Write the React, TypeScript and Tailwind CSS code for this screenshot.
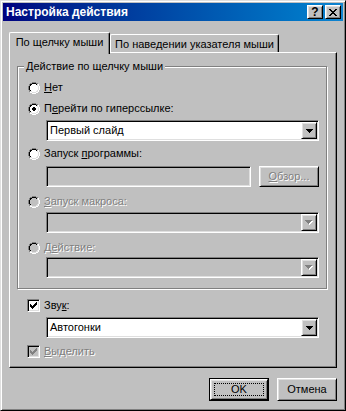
import React from 'react';

// classic 3D edges
const raised =
  'border border-t-white border-l-white border-r-black border-b-black shadow-[inset_1px_1px_0_#dfdfdf,inset_-1px_-1px_0_#808080]';
const sunken =
  'border border-t-[#808080] border-l-[#808080] border-r-white border-b-white shadow-[inset_1px_1px_0_#000,inset_-1px_-1px_0_#dfdfdf] p-px';
const dimmed = 'text-[#808080] [text-shadow:1px_1px_0_#fff]';

// Pixel-Bitmaps wie im klassischen Windows-Theme
const ARROW = ['#######', '.#####.', '..###..', '...#...'];
const CLOSE = ['##....##', '.##..##.', '..####..', '...##...', '..####..', '.##..##.', '##....##'];
const CHECK = ['......#', '.....##', '#...###', '##.###.', '#####..', '.###...', '..#....'];
const RADIO = [
  '....OOOO....',
  '..OOIIIIOO..',
  '.OIIFFFFIIO.',
  '.OIFFFFFFIO.',
  'OIFFFDDFFFIO',
  'OIFFDDDDFFIO',
  'OIFFDDDDFFIO',
  'OIFFFDDFFFIO',
  '.OIFFFFFFIO.',
  '.OIIFFFFIIO.',
  '..OOIIIIOO..',
  '....OOOO....',
];

function Pixels({ rows, fill, shadow }: { rows: string[]; fill: string; shadow?: string }) {
  const pts: [number, number][] = [];
  rows.forEach((r, y) => [...r].forEach((c, x) => c === '#' && pts.push([x, y])));
  const w = rows[0].length + (shadow ? 1 : 0);
  const h = rows.length + (shadow ? 1 : 0);
  return (
    <svg width={w} height={h} shapeRendering="crispEdges" className="block shrink-0">
      {shadow && pts.map(([x, y]) => <rect key={`s${x}-${y}`} x={x + 1} y={y + 1} width={1} height={1} fill={shadow} />)}
      {pts.map(([x, y]) => <rect key={`${x}-${y}`} x={x} y={y} width={1} height={1} fill={fill} />)}
    </svg>
  );
}

function Radio({ checked = false, disabled = false }: { checked?: boolean; disabled?: boolean }) {
  const cells: React.ReactNode[] = [];
  RADIO.forEach((r, y) =>
    [...r].forEach((c, x) => {
      let color = '';
      const tl = x + y <= 10;
      if (c === 'O') color = tl ? '#808080' : '#fff';
      if (c === 'I') color = tl ? '#000' : '#dfdfdf';
      if (c === 'F') color = disabled ? '#c0c0c0' : '#fff';
      if (c === 'D') color = checked ? '#000' : disabled ? '#c0c0c0' : '#fff';
      if (color) cells.push(<rect key={`${x}-${y}`} x={x} y={y} width={1} height={1} fill={color} />);
    })
  );
  return (
    <svg width={12} height={12} shapeRendering="crispEdges" className="block shrink-0">
      {cells}
    </svg>
  );
}

function Checkbox({ checked = false, disabled = false }: { checked?: boolean; disabled?: boolean }) {
  return (
    <div className={`${sunken} w-[13px] h-[13px] shrink-0`}>
      <div className={`w-full h-full flex items-center justify-center ${disabled ? 'bg-[#c0c0c0]' : 'bg-white'}`}>
        {checked && <Pixels rows={CHECK} fill={disabled ? '#808080' : '#000'} />}
      </div>
    </div>
  );
}

function Combo({ value, disabled = false, className = '' }: { value?: string; disabled?: boolean; className?: string }) {
  return (
    <div className={`${sunken} w-[273px] h-[21px] flex ${className}`}>
      <div className={`flex-1 flex items-center pl-[2px] ${disabled ? 'bg-[#c0c0c0]' : 'bg-white'}`}>{value}</div>
      <div className={`${raised} w-[16px] h-full bg-[#c0c0c0] flex items-center justify-center`}>
        {disabled ? <Pixels rows={ARROW} fill="#808080" shadow="#fff" /> : <Pixels rows={ARROW} fill="#000" />}
      </div>
    </div>
  );
}

function Option({
  checked,
  disabled,
  className = '',
  children,
}: {
  checked?: boolean;
  disabled?: boolean;
  className?: string;
  children: React.ReactNode;
}) {
  return (
    <div className={`flex items-center gap-[4px] h-[13px] ${className}`}>
      <Radio checked={checked} disabled={disabled} />
      <span className={`whitespace-nowrap ${disabled ? dimmed : ''}`}>{children}</span>
    </div>
  );
}

export default function App() {
  return (
    <div className="w-[346px] h-[411px] bg-[#c0c0c0] border border-t-[#dfdfdf] border-l-[#dfdfdf] border-r-black border-b-black shadow-[inset_1px_1px_0_#fff,inset_-1px_-1px_0_#808080] p-[2px] flex flex-col font-['Liberation_Sans',Arial,sans-serif] text-[11px] leading-[13px] text-black select-none">
      {/* Titelleiste */}
      <div className="h-[18px] flex items-center bg-linear-to-r from-[#000080] to-[#1084d0] pl-[3px] pr-[2px]">
        <span className="flex-1 text-white font-bold text-[12px] whitespace-nowrap">Настройка действия</span>
        <div className={`${raised} w-[16px] h-[14px] bg-[#c0c0c0] flex items-center justify-center font-bold text-[12px] leading-none`}>
          ?
        </div>
        <div className={`${raised} w-[16px] h-[14px] bg-[#c0c0c0] flex items-center justify-center ml-[2px]`}>
          <Pixels rows={CLOSE} fill="#000" />
        </div>
      </div>

      <div className="flex flex-col px-[6px]">
        {/* Reiter */}
        <div className="flex items-end mt-[11px] -mb-[2px] relative z-10">
          <div className="h-[22px] w-[101px] bg-[#c0c0c0] border-l border-t border-r border-l-white border-t-white border-r-black rounded-t-[2px] shadow-[inset_-1px_0_0_#808080] flex justify-center pt-[3px] whitespace-nowrap">
            По щелчку мыши
          </div>
          <div className="h-[18px] w-[169px] mb-[2px] bg-[#c0c0c0] border-l border-t border-r border-l-white border-t-white border-r-black rounded-t-[2px] shadow-[inset_-1px_0_0_#808080] flex justify-center pt-[3px] whitespace-nowrap">
            По наведении указателя мыши
          </div>
        </div>

        {/* Reiterseite */}
        <div className="h-[316px] bg-[#c0c0c0] border border-t-white border-l-white border-r-black border-b-black shadow-[inset_-1px_-1px_0_#808080] flex flex-col pt-[7px]">
          <fieldset className="ml-[7px] w-[310px] h-[229px] border border-[#808080] shadow-[1px_1px_0_#fff,inset_1px_1px_0_#fff] pl-[6px]">
            <legend className="px-[2px] bg-[#c0c0c0] whitespace-nowrap">Действие по щелчку мыши</legend>
            <div className="flex flex-col pl-[4px]">
              <Option className="mt-[8px]">
                <u>Н</u>ет
              </Option>
              <Option checked className="mt-[8px]">
                П<u>е</u>рейти по гиперссылке:
              </Option>
              <Combo value="Первый слайд" className="mt-[5px] ml-[18px]" />
              <Option className="mt-[6px]">
                Запуск <u>п</u>рограммы:
              </Option>
              <div className="flex gap-[8px] mt-[6px] ml-[18px]">
                <div className={`${sunken} w-[205px] h-[21px]`}>
                  <div className="w-full h-full bg-[#c0c0c0]" />
                </div>
                <div className={`${raised} w-[60px] h-[21px] flex items-center justify-center ${dimmed}`}>
                  <span>
                    <u>О</u>бзор...
                  </span>
                </div>
              </div>
              <Option disabled className="mt-[8px]">
                <u>З</u>апуск макроса:
              </Option>
              <Combo disabled className="mt-[4px] ml-[18px]" />
              <Option disabled className="mt-[8px]">
                Д<u>е</u>йствие:
              </Option>
              <Combo disabled className="mt-[3px] ml-[18px]" />
            </div>
          </fieldset>

          <div className="flex items-center gap-[4px] h-[13px] mt-[10px] ml-[17px]">
            <Checkbox checked />
            <span>
              Зву<u>к</u>:
            </span>
          </div>
          <Combo value="Автогонки" className="mt-[5px] ml-[36px]" />
          <div className="flex items-center gap-[4px] h-[13px] mt-[7px] ml-[17px]">
            <Checkbox checked disabled />
            <span className={dimmed}>
              <u>В</u>ыделить
            </span>
          </div>
        </div>

        {/* Schaltflächen */}
        <div className="flex justify-end gap-[8px] mt-[10px]">
          <div className="w-[60px] h-[23px] border border-black">
            <div className={`${raised} w-full h-full p-[3px]`}>
              <div className="w-full h-full border border-dotted border-black flex items-center justify-center">OK</div>
            </div>
          </div>
          <div className={`${raised} w-[60px] h-[23px] flex items-center justify-center`}>Отмена</div>
        </div>
      </div>
    </div>
  );
}
